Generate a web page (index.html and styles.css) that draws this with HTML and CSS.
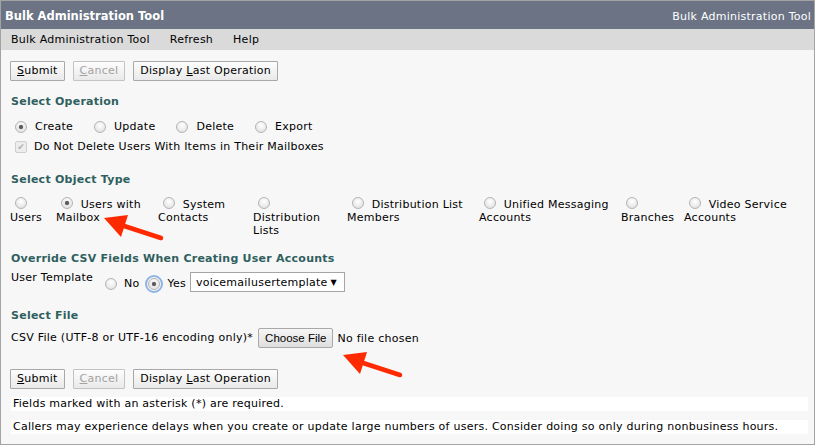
FILE: index.html
```html
<!DOCTYPE html>
<html lang="en">
<head>
    <meta charset="UTF-8">
    <title>Bulk Administration Tool</title>
    <link rel="stylesheet" href="styles.css">
</head>
<body>
    <div class="window">
        <div class="titlebar">
            <span class="title">Bulk Administration Tool</span>
            <span class="title-right">Bulk Administration Tool</span>
        </div>
        <div class="menubar">
            <span>Bulk Administration Tool</span>
            <span>Refresh</span>
            <span>Help</span>
        </div>

        <div class="content">
            <div class="toolbar">
                <span class="btn"><u>S</u>ubmit</span>
                <span class="btn disabled"><u>C</u>ancel</span>
                <span class="btn">Display <u>L</u>ast Operation</span>
            </div>

            <h2 class="section-title first">Select Operation</h2>
            <div class="options">
                <span class="opt"><span class="radio checked"></span>Create</span>
                <span class="opt"><span class="radio"></span>Update</span>
                <span class="opt"><span class="radio"></span>Delete</span>
                <span class="opt"><span class="radio"></span>Export</span>
            </div>
            <div class="check-row">
                <span class="checkbox">&#10004;</span>Do Not Delete Users With Items in Their Mailboxes
            </div>

            <h2 class="section-title objects">Select Object Type</h2>
            <div class="object-types">
                <div class="type"><span class="radio"></span> Users</div>
                <div class="type"><span class="radio checked"></span> Users with Mailbox</div>
                <div class="type"><span class="radio"></span> System Contacts</div>
                <div class="type"><span class="radio"></span> Distribution Lists</div>
                <div class="type"><span class="radio"></span> Distribution List Members</div>
                <div class="type"><span class="radio"></span> Unified Messaging Accounts</div>
                <div class="type"><span class="radio"></span> Branches</div>
                <div class="type"><span class="radio"></span> Video Service Accounts</div>
            </div>

            <h2 class="section-title override">Override CSV Fields When Creating User Accounts</h2>
            <div class="template-row">
                <span class="field-label">User Template</span>
                <span class="opt small"><span class="radio"></span>No</span>
                <span class="opt small"><span class="radio checked focused"></span>Yes</span>
                <span class="select">voicemailusertemplate<span class="caret">&#9660;</span></span>
            </div>

            <h2 class="section-title file">Select File</h2>
            <div class="file-row">
                <span class="field-label">CSV File (UTF-8 or UTF-16 encoding only)*</span>
                <span class="file-btn">Choose File</span>
                <span class="file-name">No file chosen</span>
            </div>

            <div class="toolbar bottom">
                <span class="btn"><u>S</u>ubmit</span>
                <span class="btn disabled"><u>C</u>ancel</span>
                <span class="btn">Display <u>L</u>ast Operation</span>
            </div>

            <p class="note">Fields marked with an asterisk (*) are required.</p>
            <p class="note">Callers may experience delays when you create or update large numbers of users. Consider doing so only during nonbusiness hours.</p>
        </div>

        <!-- callout arrows drawn over the page -->
        <svg class="callouts" width="815" height="445" viewBox="0 0 815 445">
            <g id="arrow" fill="#ff2a00" stroke="#ff2a00">
                <polygon points="104,218 128,215 121,237" stroke="none"/>
                <line x1="118" y1="224" x2="161" y2="238" stroke-width="4.5" stroke-linecap="round"/>
            </g>
            <use href="#arrow" transform="translate(239,137)"/>
        </svg>
    </div>
</body>
</html>
```

FILE: styles.css
```css
:root {
    --title-bg: #6b7385;
    --menu-bg: #dadada;
    --page-bg: #f7f7f7;
    --heading: #2f5f5e;
    --border: #a3a3a3;
}

* {
    box-sizing: border-box;
}

body {
    margin: 0;
    font-family: "DejaVu Sans", Verdana, sans-serif;
    font-size: 11px;
    letter-spacing: 0.25px;
    color: #000;
    background: #fff;
}

.window {
    position: relative;
    height: 445px;
    border: 1px solid var(--border);
    background: var(--page-bg);
}

.titlebar {
    height: 28px;
    background: var(--title-bg);
    color: #fff;
    display: flex;
    justify-content: space-between;
    align-items: center;
    padding: 2px 3px 0 4px;
}

.title {
    font-weight: bold;
    font-size: 11.5px;
    letter-spacing: 0;
}

.menubar {
    height: 21px;
    background: var(--menu-bg);
    display: flex;
    align-items: center;
    gap: 20px;
    padding-left: 10px;
}

.content {
    padding: 11px 0 0 9px;
}

.toolbar {
    display: flex;
    gap: 8px;
}

.toolbar.bottom {
    margin-top: 21px;
}

.btn {
    display: inline-block;
    height: 20px;
    line-height: 18px;
    padding: 0 6px;
    border: 1px solid #a8a8a8;
    border-radius: 1px;
    background: linear-gradient(#fdfdfd, #e9e9e9);
    white-space: nowrap;
}

.btn.disabled {
    color: #a2a2a2;
    border-color: #c3c3c3;
}

.section-title {
    margin: 17px 0 8px 1px;
    font-size: 11px;
    line-height: 14px;
    font-weight: bold;
    letter-spacing: 0.25px;
    color: var(--heading);
}

.section-title.first {
    margin-top: 14px;
    margin-bottom: 9px;
}

.section-title.objects {
    margin-top: 18px;
}

.section-title.override {
    margin-top: 15px;
    margin-bottom: 6px;
}

.section-title.file {
    margin-top: 17px;
    margin-bottom: 5px;
}

.options {
    display: flex;
    height: 17px;
    align-items: center;
}

.opt {
    display: inline-flex;
    align-items: center;
    margin-right: 16px;
}

.radio {
    display: inline-block;
    width: 12px;
    height: 12px;
    margin: 0 8px 0 5px;
    border: 1px solid #b4b4b4;
    border-radius: 50%;
    background: radial-gradient(circle at 50% 35%, #ffffff, #dcdcdc);
    position: relative;
}

.radio.checked::after {
    content: "";
    position: absolute;
    left: 3px;
    top: 3px;
    width: 4px;
    height: 4px;
    border-radius: 50%;
    background: #5a5a5a;
    box-shadow: 0 0 1px #777;
}

.radio.focused {
    outline: 2px solid #8fb3e3;
    outline-offset: 1px;
}

.check-row {
    display: flex;
    align-items: center;
    height: 17px;
    margin-top: 3px;
}

.checkbox {
    display: inline-flex;
    align-items: center;
    justify-content: center;
    width: 12px;
    height: 12px;
    margin: 0 7px 0 5px;
    border: 1px solid #cfcfcf;
    border-radius: 2px;
    background: #ededed;
    color: #b0b0b0;
    font-size: 9px;
    letter-spacing: 0;
}

.object-types {
    display: grid;
    grid-template-columns: 46px 102px 95px 94px 132px 142px 63px 120px;
    align-items: start;
    line-height: 13px;
}

.type {
    padding-right: 8px;
}

.type .radio {
    margin: 2px 4px 0 5px;
    vertical-align: -1px;
}

.template-row {
    display: flex;
    align-items: center;
    height: 20px;
}

.template-row .field-label {
    align-self: flex-start;
    margin: 0 7px 0 1px;
    line-height: 12px;
}

.opt.small {
    margin-right: 4px;
    padding-top: 3px;
}

.opt.small .radio {
    margin: 0 7px 0 5px;
}

.select {
    display: inline-flex;
    align-items: center;
    justify-content: space-between;
    width: 155px;
    height: 20px;
    padding: 0 7px 0 5px;
    border: 1px solid #a5a5a5;
    background: #fff;
    font-size: 11px;
}

.caret {
    font-size: 8px;
}

.file-row {
    display: flex;
    align-items: center;
    height: 20px;
}

.file-row .field-label {
    margin: 0 5px 2px 1px;
}

.file-btn {
    height: 20px;
    display: inline-flex;
    align-items: center;
    padding: 0 6px;
    border: 1px solid #a9a9a9;
    border-radius: 2px;
    background: linear-gradient(#f6f6f6, #dedede);
    font-family: "Liberation Sans", Arial, sans-serif;
    font-size: 11.5px;
    letter-spacing: 0;
}

.file-name {
    margin-left: 4px;
}

.note {
    width: 797px;
    height: 14px;
    margin: 8px 0 0 1px;
    padding-left: 2px;
    line-height: 14px;
    background: #fff;
}

.note + .note {
    margin-top: 9px;
}

.callouts {
    position: absolute;
    left: -1px;
    top: -1px;
    pointer-events: none;
}
```
